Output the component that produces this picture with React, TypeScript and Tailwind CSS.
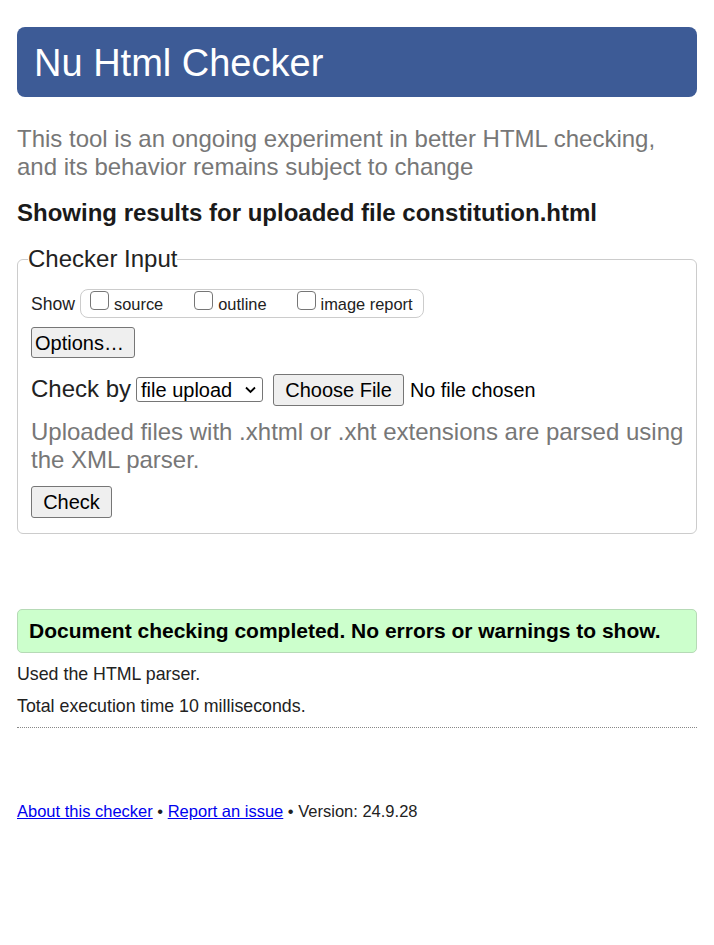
import React from "react";

const Box = () => (
  <span className="inline-block w-[19px] h-[19px] border border-[#767676] rounded-[4px] bg-white self-start mt-[1px]" />
);

export default function App() {
  return (
    <div className="min-h-[945px] bg-white text-[#222] px-[17px] pt-[27px]" style={{ fontFamily: '"Liberation Sans", Arial, sans-serif' }}>
      <div className="h-[70px] rounded-[8px] bg-[#3d5b96] flex items-center pl-[17px]">
        <h1 className="text-white text-[38px] leading-none pt-[1px]">Nu Html Checker</h1>
      </div>
      <p className="mt-[28px] text-[#777] text-[24px] leading-[28px]">
        This tool is an ongoing experiment in better HTML checking, and its behavior remains subject to change
      </p>
      <h2 className="mt-[18px] font-bold text-[24px] leading-[28px] text-[#1a1a1a]">Showing results for uploaded file constitution.html</h2>

      <fieldset className="mt-[18px] border border-[#ccc] rounded-[6px] px-[13px] pb-[15px] pt-[0px] h-[289px]">
        <legend className="text-[24px] leading-[28px] px-[0px] -ml-[3px] text-[#222]">Checker Input</legend>
        <div className="flex items-center mt-[16px]">
          <span className="text-[17.6px] mr-[5px] mt-[1px]">Show</span>
          <div className="flex items-center h-[29px] border border-[#ccc] rounded-[8px] pl-[9px] pr-[10px] text-[16.4px]">
            <label className="flex items-center mr-[31px]"><Box /><span className="ml-[5px] mt-[2px]">source</span></label>
            <label className="flex items-center mr-[30px]"><Box /><span className="ml-[5px] mt-[2px]">outline</span></label>
            <label className="flex items-center"><Box /><span className="ml-[5px] mt-[2px]">image report</span></label>
          </div>
        </div>
        <button className="mt-[9px] h-[31px] w-[104px] text-left pl-[3px] bg-[#efefef] border border-[#767676] rounded-[3px] text-[20px] leading-none text-black">Options…</button>
        <div className="flex items-center mt-[16px] h-[32px]">
          <span className="text-[24px] leading-none mr-[5px] -mt-[2px]">Check by</span>
          <div className="h-[25px] w-[127px] border border-[#767676] rounded-[3px] flex items-center justify-between pl-[4px] pr-[6px] text-[20px] leading-none text-black -mt-[1px]">
            <span>file upload</span>
            <svg width="11" height="8" viewBox="0 0 11 8"><path d="M1 1.5 L5.5 6 L10 1.5" fill="none" stroke="#000" strokeWidth="1.8" /></svg>
          </div>
          <button className="ml-[10px] h-[32px] w-[131px] bg-[#efefef] border border-[#767676] rounded-[3px] text-[20px] leading-none text-black">Choose File</button>
          <span className="ml-[6px] text-[19.8px] leading-none text-black mt-[1px]">No file chosen</span>
        </div>
        <p className="mt-[12px] -mr-[4px] text-[#777] text-[24px] leading-[28px]">Uploaded files with .xhtml or .xht extensions are parsed using the XML parser.</p>
        <button className="mt-[12px] h-[32px] w-[81px] bg-[#efefef] border border-[#767676] rounded-[3px] text-[20px] leading-none text-black">Check</button>
      </fieldset>

      <div className="mt-[75px] h-[44px] bg-[#ccffcc] border border-[#b6dab6] rounded-[5px] flex items-center pl-[11px]">
        <span className="font-bold text-[21px] text-black">Document checking completed. No errors or warnings to show.</span>
      </div>
      <p className="mt-[11px] text-[17.8px] leading-[20px]">Used the HTML parser.</p>
      <p className="mt-[12px] text-[17.8px] leading-[20px]">Total execution time 10 milliseconds.</p>
      <div className="mt-[11px] border-t border-dotted border-[#888]" />
      <p className="mt-[73px] text-[16.5px] leading-[20px] text-[#222]">
        <a href="#" className="text-[#0000ee] underline">About this checker</a> • <a href="#" className="text-[#0000ee] underline">Report an issue</a> • Version: 24.9.28
      </p>
    </div>
  );
}
